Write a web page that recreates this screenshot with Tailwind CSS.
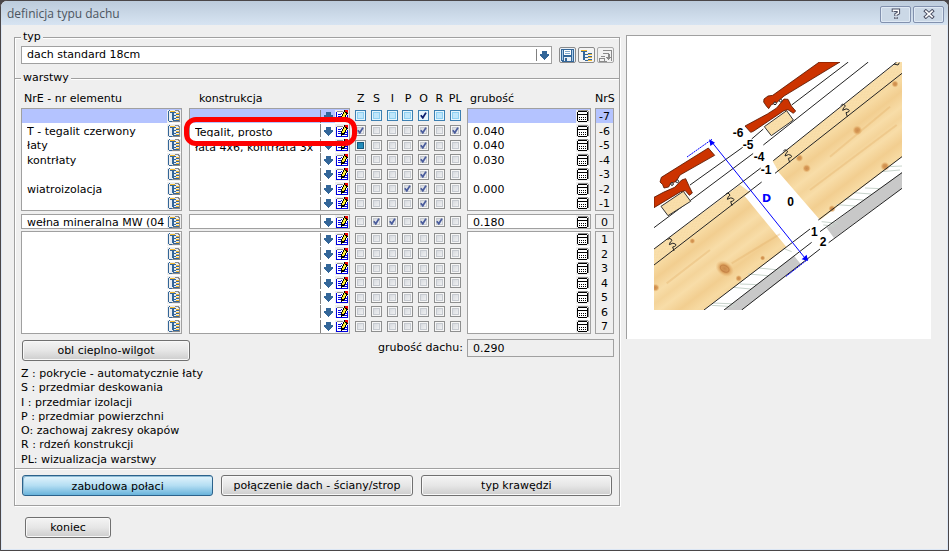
<!DOCTYPE html>
<html lang="pl">
<head>
<meta charset="utf-8">
<title>definicja typu dachu</title>
<script src="https://cdn.jsdelivr.net/npm/@tailwindcss/browser@4"></script>
</head>
<body class="bg-[#4a4648] text-black text-[11px] leading-[14px] font-['DejaVu_Sans',sans-serif]">

<svg class="hidden" aria-hidden="true">
  <symbol id="i-tree" viewBox="0 0 12 12">
    <g shape-rendering="crispEdges">
      <path fill="#e9edf1" d="M2 0h8v1h1v1h1v10H2z"/>
      <path fill="#8a8a8a" d="M7 0h4v1h1v11H4v-1h7V2h-1V1H7z"/>
      <path fill="#336699" d="M0 1h1v10H0zM1 0h1v1H1zM1 11h3v1H1zM2 2h6v1H2zM4 3h2v7H4zM6 5h2v1H6zM6 8h2v1H6zM5 10h3v1H5zM8 4h3v1H8zM8 7h3v1H8zM8 10h3v1H8z"/>
      <path fill="#f5b82e" d="M2 1h5v1H2zM8 3h3v1H8zM8 6h3v1H8zM8 9h3v1H8z"/>
    </g>
  </symbol>
  <symbol id="i-arrow" viewBox="0 0 9 9">
    <path fill="#336699" shape-rendering="crispEdges" d="M2 0h5v3h2v2H8v1H7v1H6v1H5v1H4V8H3V7H2V6H1V5H0V3h2z"/>
  </symbol>
  <symbol id="i-edit" viewBox="0 0 12 12">
    <g shape-rendering="crispEdges">
      <path fill="#fff" d="M1 2h10v10H1z"/>
      <path fill="#0000e0" d="M0 2h1v10H0zM1 11h11v1H1zM11 5h1v6h-1zM2 4h3v1H2zM2 6h3v1H2zM2 8h3v1H2zM8 7h3v1H8zM8 9h3v1H8zM5 3h1v1H5z"/>
      <path fill="#909090" d="M1 1h6v1H1z"/>
      <path fill="#000" d="M8 0h4v4h-1v1h-1v2H9v2H8v1H6v1H5V6h1V4h1V2h1z"/>
      <path fill="#ffee33" d="M8 2h1v1h1v2H9v2H8v1H6V6h1V4h1z"/>
      <path fill="#f00000" d="M9 0h3v3h-1V2H9z"/>
    </g>
  </symbol>
  <symbol id="i-calc" viewBox="0 0 12 12">
    <g shape-rendering="crispEdges">
      <path fill="#8c8c8c" d="M1 0h10v1h1v10h-1V1H1z"/>
      <path fill="#000" d="M1 1h9v1h1v9h-1v1H1v-1H0V2h1z"/>
      <path fill="#fff" d="M1 2h9v2H1zM1 5h9v6H1z"/>
      <path fill="#000" d="M2 7h1v1H2zM4 7h1v1H4zM6 7h1v1H6zM8 7h1v1H8zM2 9h1v1H2zM4 9h1v1H4zM6 9h1v1H6zM8 9h1v1H8z"/>
    </g>
  </symbol>
  <symbol id="i-check" viewBox="0 0 7 7">
    <path fill="none" stroke="currentColor" stroke-width="1.8" d="M.8 3.2 2.8 5.8 6 .6"/>
  </symbol>
</svg>

<main class="flex min-h-screen flex-col rounded-t-[7px] border border-[#4a4648] bg-[#efefef]">
  <header class="flex h-6 items-center justify-between rounded-t-[6px] bg-linear-to-b from-[#bccbdb] to-[#d7e4f2] pl-1.5 pr-1">
    <h1 class="pt-0.5 font-['Open_Sans',sans-serif] text-[12px] text-[#4c5560]">definicja typu dachu</h1>
    <div class="flex gap-0.5 pt-0.5">
      <button aria-label="Pomoc" class="grid h-[17px] w-[31px] place-items-center rounded-[2px] border border-[#8291ae] bg-[#cbd8e6] shadow-[inset_0_0_0_1px_#dfe9f4]">
        <svg width="10" height="12" viewBox="0 0 10 12" fill="none"><path d="M2.4 4V2.3h5V5L5 6.5V8M5 9v2" stroke="#4c5064" stroke-width="3.4"/><path d="M2.4 3.6V2.3h5V5L5 6.5v1.2M5 9.3v1.3" stroke="#fff" stroke-width="1.4"/></svg>
      </button>
      <button aria-label="Zamknij" class="grid h-[17px] w-[31px] place-items-center rounded-[2px] border border-[#8291ae] bg-[#cbd8e6] shadow-[inset_0_0_0_1px_#dfe9f4]">
        <svg width="12" height="10" viewBox="0 0 12 10" fill="none"><path d="M1.5 1 10.5 9M10.5 1 1.5 9" stroke="#4c5064" stroke-width="3.6"/><path d="M2.3 1.7 9.7 8.3M9.7 1.7 2.3 8.3" stroke="#fff" stroke-width="1.6"/></svg>
      </button>
    </div>
  </header>

  <div class="flex flex-1 items-start gap-1.5 border-x border-b border-[#dbe6f4] pl-3 pr-4">
    <form class="min-w-0 flex-1 pt-[5px]">
      <fieldset class="h-12 min-w-0 border border-b-0 border-[#a0a0a0] pl-1.5 pr-[5px] shadow-[1px_1px_0_#fff,inset_1px_1px_0_#fff]">
        <legend class="bg-[#efefef] px-0.5">typ</legend>
        <div class="flex items-center pt-0.5">
          <div class="mr-[7px] flex h-[18px] flex-1 items-center border border-[#a0a0a0] bg-white">
            <select aria-label="Typ dachu" class="h-4 flex-1 appearance-none bg-white pl-[5px] leading-[16px]"><option>dach standard 18cm</option></select>
            <span class="grid h-3 w-[15px] place-items-center border-l border-[#808080]"><svg width="9" height="9"><use href="#i-arrow"/></svg></span>
          </div>
          <div class="flex gap-0.5">
            <button type="button" aria-label="Zapisz" class="grid h-4 w-[17px] place-items-center rounded-[2px] border border-[#8a8a8a] bg-[#eaf1f8]">
              <svg width="13" height="13" viewBox="0 0 13 13" shape-rendering="crispEdges"><path fill="#336699" d="M0 0h13v13H1v-1H0z"/><path fill="#a9cbe8" d="M1 1h1v10H1zM11 1h1v11h-1z"/><path fill="#fff" d="M3 1h7v5H3z"/><path fill="#7fa9cf" d="M4 2h5v1H4zM4 4h5v1H4z"/><path fill="#e8eef4" d="M3 8h7v4H3z"/><path fill="#336699" d="M4 9h2v3H4z"/></svg>
            </button>
            <button type="button" aria-label="Drzewo typów" class="grid h-4 w-[17px] place-items-center rounded-[2px] border border-[#8a8a8a] bg-[#f4f4f4]">
              <svg width="13" height="13" viewBox="0 0 13 13" shape-rendering="crispEdges"><path fill="#336699" d="M1 2h6v1H1zM3 3h2v8H3zM5 5h3v1H5zM5 8h3v1H5zM5 11h3v1H5zM8 4h4v1H8zM8 7h4v1H8zM8 10h4v1H8z"/><path fill="#f5b82e" d="M1 1h6v1H1zM8 5h4v1H8zM8 8h4v1H8zM8 11h4v1H8z"/></svg>
            </button>
            <button type="button" aria-label="Wstaw" class="grid h-4 w-[17px] place-items-center rounded-[2px] border border-[#a8a8a8] bg-[#f2f2f2]">
              <svg width="13" height="13" viewBox="0 0 13 13" shape-rendering="crispEdges" fill="#8a8a8a"><path d="M4 1h9v1H4zM12 2h1v10h-1zM4 4h6v1H4zM9 5h2v3h1v1h-1v1h-1v1H9v-1H8V9H7V8h2zM2 7h4v1H2zM0 9h6v1H0zM0 10h1v3H0zM5 10h1v2H5zM1 12h7v1H1z"/></svg>
            </button>
          </div>
        </div>
      </fieldset>

      <fieldset class="-mt-[7px] min-w-0 border border-[#a0a0a0] pl-1.5 pr-[5px] shadow-[1px_1px_0_#fff,inset_1px_1px_0_#fff]">
        <legend class="bg-[#efefef] px-0.5">warstwy</legend>
        <table class="mt-[7px] w-full table-fixed border-separate border-spacing-0">
          <colgroup>
            <col><col class="w-[7px]"><col><col class="w-[3px]"><col class="w-[110px]"><col class="w-[4px]"><col class="w-[124px]"><col class="w-[4px]"><col class="w-[19px]">
          </colgroup>
          <thead>
            <tr class="h-4 text-left align-top">
              <th class="p-0 pl-[3px] font-normal">NrE - nr elementu</th><td></td>
              <th class="p-0 pl-2.5 font-normal">konstrukcja</th><td></td>
              <th class="p-0 font-normal"><span class="grid grid-cols-7 text-center"><span>Z</span><span>S</span><span>I</span><span>P</span><span>O</span><span>R</span><span>PL</span></span></th><td></td>
              <th class="p-0 pl-[3px] font-normal">grubość</th><td></td>
              <th class="whitespace-nowrap p-0 font-normal">NrS</th>
            </tr>
          </thead>
          <tbody id="layers"></tbody>
        </table>

        <div class="flex items-start justify-between pt-[5px]">
          <button type="button" class="mt-px ml-px h-[21px] w-[168px] rounded-[3px] border border-[#707070] bg-linear-to-b from-[#f4f4f4] from-0% via-[#e6e6e6] via-50% to-[#cdcdcd] shadow-[inset_0_0_0_1px_#f8f8f8]">obl cieplno-wilgot</button>
          <label class="flex items-center gap-1">grubość dachu:
            <input readonly value="0.290" class="h-[18px] w-[147px] border border-[#a0a0a0] bg-[#efefef] px-[5px]">
          </label>
        </div>

        <ul class="grid h-[107px] grid-rows-7 pt-1.5 pb-px">
          <li>Z : pokrycie - automatycznie łaty</li>
          <li>S : przedmiar deskowania</li>
          <li>I : przedmiar izolacji</li>
          <li>P : przedmiar powierzchni</li>
          <li>O: zachowaj zakresy okapów</li>
          <li>R : rdzeń konstrukcji</li>
          <li>PL: wizualizacja warstwy</li>
        </ul>
      </fieldset>

      <div class="grid grid-cols-3 gap-2 border border-t-0 border-[#a0a0a0] px-[7px] pt-1.5 pb-[9px] shadow-[1px_1px_0_#fff,inset_1px_1px_0_#fff]">
        <button type="button" class="h-[21px] rounded-[3px] border border-[#2c628b] bg-linear-to-b from-[#e3f4fc] from-0% via-[#b4def3] via-50% to-[#68b3db] pt-0.5 shadow-[inset_1px_1px_0_#8fbcd6]">zabudowa połaci</button>
        <button type="button" class="h-[21px] rounded-[3px] border border-[#707070] bg-linear-to-b from-[#f4f4f4] from-0% via-[#e6e6e6] via-50% to-[#cdcdcd] whitespace-nowrap shadow-[inset_0_0_0_1px_#f8f8f8]">połączenie dach - ściany/strop</button>
        <button type="button" class="h-[21px] rounded-[3px] border border-[#707070] bg-linear-to-b from-[#f4f4f4] from-0% via-[#e6e6e6] via-50% to-[#cdcdcd] shadow-[inset_0_0_0_1px_#f8f8f8]">typ krawędzi</button>
      </div>
      <button type="button" class="mt-[11px] ml-[11px] h-[21px] w-[86px] rounded-[3px] border border-[#707070] bg-linear-to-b from-[#f4f4f4] from-0% via-[#e6e6e6] via-50% to-[#cdcdcd] shadow-[inset_0_0_0_1px_#f8f8f8]">koniec</button>
    </form>

    <aside class="mt-2.5 w-[305px] shrink-0 border-t border-l border-[#a0a0a0] bg-white pt-[26px] pb-[29px] pl-[27px]">
      <svg class="block" width="248" height="248" viewBox="72 96 744 744" role="img" aria-label="Przekrój warstw dachu">
        <defs>
          <linearGradient id="wood" gradientUnits="userSpaceOnUse" x1="300" y1="500" x2="372" y2="595" spreadMethod="reflect">
            <stop offset="0" stop-color="#f4d49a"/><stop offset=".25" stop-color="#f7daa2"/><stop offset=".5" stop-color="#f2ce90"/><stop offset=".8" stop-color="#f8dda8"/><stop offset="1" stop-color="#f4d49a"/>
          </linearGradient>
          <radialGradient id="knot"><stop offset="0" stop-color="#cb8a4c"/><stop offset=".5" stop-color="#d99c58"/><stop offset="1" stop-color="#e9b873" stop-opacity="0"/></radialGradient>
          <pattern id="lath" width="14" height="10" patternUnits="userSpaceOnUse" patternTransform="rotate(-37)"><rect width="14" height="10" fill="#f9dfab"/><path d="M1 3h6M8 8h5" stroke="#f0d096" stroke-width="1.5"/></pattern>
        </defs>
        <!-- rafters -->
        <path fill="url(#wood)" d="M72 705 342 496 470 652 228 835 222 840H72zM440 420 816 130V380L570 570z"/>
        <g fill="url(#knot)">
          <ellipse cx="284" cy="716" rx="30" ry="22" transform="rotate(35 284 716)"/><ellipse cx="76" cy="773" rx="13" ry="12"/><circle cx="187" cy="633" r="9"/><circle cx="326" cy="745" r="10"/><circle cx="508" cy="384" r="12"/><circle cx="530" cy="415" r="13"/><circle cx="682" cy="301" r="15"/><circle cx="765" cy="409" r="14"/><circle cx="795" cy="162" r="11"/><circle cx="606" cy="536" r="11"/><circle cx="398" cy="684" r="8"/>
        </g>
        <path fill="none" stroke="#e2ae68" stroke-width="6" opacity=".35" d="M305 700 450 612M110 760 240 660M540 480 800 285M600 380 780 230"/>
        <ellipse cx="284" cy="716" rx="14" ry="9" fill="none" stroke="#c48347" stroke-width="3" transform="rotate(30 284 716)"/>
        <!-- decking -->
        <path fill="url(#lath)" d="M72 657 330 464 360 487 72 705zM428 394 802 96H816V130L446 425z"/>
        <!-- insulation hatch and lining board -->
        <path fill="#c8c8c8" d="M282 840 492 677 514 704 335 840zM590 594 816 426V475L612 624z"/>
        <g fill="none" stroke="#c8d4cc" stroke-width="3"><path d="M245 826 310 830M250 819 318 822M310 772 372 778M330 762 385 764M355 732 425 738M385 714 450 720M460 655 485 665M575 575 625 580M580 585 612 588M620 524 675 528M645 506 700 510M670 488 724 492M705 474 752 476M755 425 810 420M775 410 816 408"/></g>
        <!-- layer lines -->
        <g fill="none" stroke="#222" stroke-width="3">
          <path d="M72 657 395 412M430 392 800 96M72 705 395 456M435 430 816 130M222 840 540 597M565 570 816 380M282 840 545 637M570 605 816 428M335 840 570 657M596 638 816 475M72 593 370 370M400 345 715 96M180 465 345 347M365 327 400 297M485 225 655 96"/>
        </g>
        <g fill="none" stroke="#222" stroke-width="3"><path id="tongue" d="M113 630q3-8 10-3t-2 9l-3 8q12-8 18-2t-8 9l4 12"/><use href="#tongue" x="174" y="-136"/><use href="#tongue" x="347" y="-266"/><use href="#tongue" x="520" y="-403"/><path d="M792 102 804 105 808 98"/></g>
        <!-- battens -->
        <g fill="url(#lath)" stroke="#333" stroke-width="3"><path d="M93 529 160 484 182 514 114 557zM403 290 470 242 490 270 424 317z"/></g>
        <!-- roof tiles -->
        <g fill="#cc3300" stroke="#5a1800" stroke-width="2.5" stroke-linejoin="round">
          <path d="M72 502 100 487 134 472 155 450 167 446 178 470 187 489 178 496 166 482 152 485 72 533z"/>
          <path d="M235 354 254 376 150 435 138 455 122 459 116 471 102 474 98 464 90 456 94 442z"/>
          <path d="M345 288 412 252 440 234 462 207 474 208 484 228 497 243 490 250 474 239 462 242 370 304 362 307z"/>
          <path d="M568 96H630L462 198 440 218 424 224 416 236 409 228 401 216 402 207 414 198 428 196z"/>
        </g>
        <g fill="#fff" stroke="#222" stroke-width="3"><circle cx="126" cy="462" r="4"/><circle cx="142" cy="454" r="4"/><circle cx="435" cy="220" r="4"/><circle cx="452" cy="212" r="4"/></g>
        <!-- thickness dimension -->
        <g stroke="#00f" fill="#00f" stroke-width="3"><path d="M243 333 528 688"/><path fill="none" stroke-dasharray="6 2" d="M171 381 246 328M468 739 535 687"/><path stroke="none" d="M238 328 255 338 241 348zM534 693 515 688 530 674z"/></g>
        <!-- layer numbers -->
        <g fill="#fff"><path d="M338 332h36v26h-36zM370 367h37v27h-37zM392 405h35v28h-35zM541 590h24v28h-24zM568 621h24v28h-24z"/></g>
        <g font-family="Liberation Sans, sans-serif" font-weight="700" font-size="36">
          <text x="308" y="321">-6</text><text x="338" y="357">-5</text><text x="371" y="393">-4</text><text x="392" y="431">-1</text><text x="472" y="527">0</text><text x="543" y="617">1</text><text x="569" y="648">2</text>
          <text x="396" y="515" fill="#00f" font-family="DejaVu Sans, sans-serif" font-size="33">D</text>
        </g>
      </svg>
    </aside>
  </div>
</main>

<script>
// element, construction, ticked columns, thickness, layer number
const flags = ['Z', 'S', 'I', 'P', 'O', 'R', 'PL'];
const groups = [
  [['', '', 'O', '', -7], ['T - tegalit czerwony', 'Tegalit, prosto', 'Z O PL', '0.040', -6],
   ['łaty', 'łata 4x6, kontrłata 3x', 'O', '0.040', -5], ['kontrłaty', '', 'O', '0.030', -4],
   ['', '', 'O', '', -3], ['wiatroizolacja', '', 'P O', '0.000', -2], ['', '', 'O', '', -1]],
  [['wełna mineralna MW (04', '', 'S I O R', '0.180', 0]],
  [1, 2, 3, 4, 5, 6, 7].map(n => ['', '', '', '', n])
];
const heights = ['h-[15px]', 'h-[15px]', 'h-[14px]', 'h-[15px]', 'h-[14px]', 'h-[15px]', 'h-[15px]'];
const spacers = ['', '<tr class="h-[3px]"><td class="p-0" colspan="9"></td></tr>', '<tr class="h-[2px]"><td class="p-0" colspan="9"></td></tr>'];
const icon = (name, label) => `<button type="button" aria-label="${label}" class="h-[13px] w-[14px] shrink-0 bg-[#efefef] pl-px"><svg class="block" width="12" height="12"><use href="#i-${name}"/></svg></button>`;

function flagBox(f, row, sel) {
  const on = row[2].split(' ').includes(f);
  const tone = sel
    ? 'border-[#3c7fb1] bg-[#bfe6fb] shadow-[inset_0_0_0_1px_#e6f6fe,inset_0_0_0_2px_#8fd0f2] checked:bg-[#e6f6fe] checked:shadow-none'
    : 'border-[#8e8f8f] bg-linear-to-br from-[#cfd3d9] to-[#f8f8f8] shadow-[inset_0_0_0_1px_#f6f6f6,inset_0_0_0_2px_#c6cad0] indeterminate:from-[#1a7ba8] indeterminate:to-[#2a9ac8] indeterminate:shadow-[inset_0_0_0_1px_#f6f6f6,inset_0_0_0_2px_#135a80]';
  return `<label class="relative grid place-items-center"><input type="checkbox" aria-label="${f} ${row[4]}" ${on ? 'checked' : ''} ${f === 'Z' && row[4] === -5 ? 'data-mixed' : ''} class="peer size-[11px] appearance-none border ${tone}"><svg width="7" height="7" class="pointer-events-none absolute hidden peer-checked:block ${sel ? 'text-[#0c2070]' : 'text-[#4a5c9c]'}"><use href="#i-check"/></svg></label>`;
}

document.getElementById('layers').innerHTML = groups.map((rows, g) => spacers[g] + rows.map((row, i) => {
  const [el, kon, , thick, nr] = row;
  const sel = nr === -7;
  const edge = 'border-x border-[#a0a0a0] p-0 ' + (i === 0 ? 'border-t ' : '') + (i === rows.length - 1 ? 'border-b ' : '');
  const bg = sel ? 'bg-[#b4c3ff]' : 'bg-white';
  const mark = nr === -6 ? '<span class="pointer-events-none absolute -top-1.5 -left-1.5 -right-2 z-10 h-[29px] rounded-[12px] border-5 border-[#fe0000]"></span>' : '';
  return `<tr class="${heights[i]}">
    <td class="${edge}${bg}"><div class="flex h-[13px] items-center"><input aria-label="Element ${nr}" value="${el}" class="h-[13px] min-w-0 flex-1 bg-transparent pt-0.5 pl-[5px]">${icon('tree', 'Wybierz element ' + nr)}</div></td><td class="p-0"></td>
    <td class="${edge}${bg} relative"><div class="flex h-[13px] items-center"><select aria-label="Konstrukcja ${nr}" class="h-[13px] min-w-0 flex-1 appearance-none overflow-hidden bg-transparent pt-0.5 pl-[5px] leading-[13px]"><option>${kon}</option></select><span class="grid h-[13px] w-[15px] shrink-0 place-items-center border-l border-[#808080] pt-px"><svg width="9" height="9"><use href="#i-arrow"/></svg></span>${icon('edit', 'Edytuj konstrukcję ' + nr)}</div>${mark}</td><td class="p-0"></td>
    <td class="p-0"><div class="grid grid-cols-7">${flags.map(f => flagBox(f, row, sel)).join('')}</div></td><td class="p-0"></td>
    <td class="${edge}${bg}"><div class="flex h-[13px] items-center"><input aria-label="Grubość ${nr}" value="${thick}" class="h-[13px] min-w-0 flex-1 bg-transparent pt-0.5 pl-[5px]">${icon('calc', 'Oblicz grubość ' + nr)}</div></td><td class="p-0"></td>
    <td class="${edge}${sel ? bg : ''} text-center"><div class="flex h-[13px] items-center justify-center pt-0.5">${nr}</div></td>
  </tr>`;
}).join('')).join('');
document.querySelectorAll('[data-mixed]').forEach(box => { box.indeterminate = true; });
</script>
</body>
</html>
